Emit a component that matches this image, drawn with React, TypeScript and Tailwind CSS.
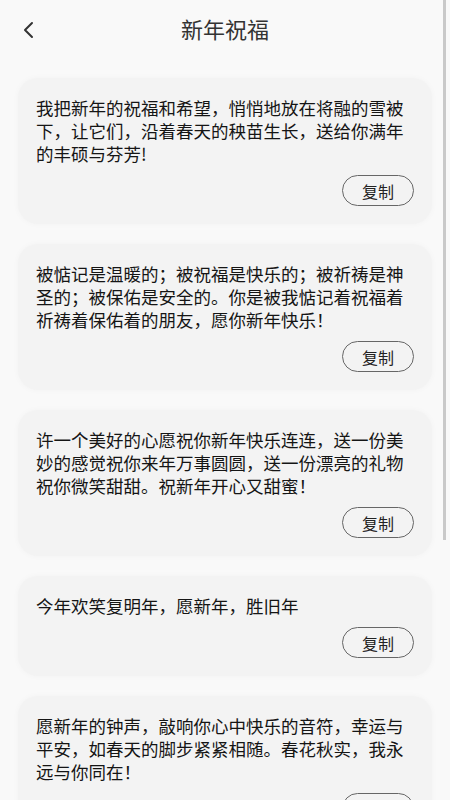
import React from "react";

const wishes: string[] = [
  "我把新年的祝福和希望，悄悄地放在将融的雪被下，让它们，沿着春天的秧苗生长，送给你满年的丰硕与芬芳!",
  "被惦记是温暖的；被祝福是快乐的；被祈祷是神圣的；被保佑是安全的。你是被我惦记着祝福着祈祷着保佑着的朋友，愿你新年快乐！",
  "许一个美好的心愿祝你新年快乐连连，送一份美妙的感觉祝你来年万事圆圆，送一份漂亮的礼物祝你微笑甜甜。祝新年开心又甜蜜！",
  "今年欢笑复明年，愿新年，胜旧年",
  "愿新年的钟声，敲响你心中快乐的音符，幸运与平安，如春天的脚步紧紧相随。春花秋实，我永远与你同在！",
];

const font = { fontFamily: '"Noto Sans CJK SC", "Noto Sans", sans-serif' };

const WishCard: React.FC<{ text: string }> = ({ text }) => (
  <div className="rounded-[20px] bg-[#f3f3f3] px-[18px] pt-[18px] pb-[18px] shadow-[0_0_6px_rgba(0,0,0,0.03)]">
    <p className="text-[17.5px] leading-[23px] text-[#151515]">{text}</p>
    <div className="mt-[10px] flex justify-end">
      <button className="h-[31px] w-[72px] rounded-full border border-[#666] text-[16px] leading-none text-[#222]">
        复制
      </button>
    </div>
  </div>
);

export default function App() {
  return (
    <div className="relative h-[800px] w-[450px] overflow-hidden bg-[#f9f9f9]" style={font}>
      {/* header */}
      <div className="relative flex h-[56px] items-center justify-center">
        <button className="absolute left-[17px] top-[17px] p-1">
          <svg width="14" height="18" viewBox="0 0 14 18" fill="none">
            <path d="M11 2 L4 9 L11 16" stroke="#333" strokeWidth="2" strokeLinecap="round" strokeLinejoin="round" />
          </svg>
        </button>
        <h1 className="text-[22px] font-normal text-[#333]">新年祝福</h1>
      </div>

      <div className="mt-[22px] flex flex-col gap-[20px] px-[18px]">
        {wishes.map((w, i) => (
          <WishCard key={i} text={w} />
        ))}
      </div>

      {/* scroll indicator */}
      <div className="absolute right-[4px] top-0 h-[540px] w-[3px] bg-[#c9c9c9]" />
    </div>
  );
}
